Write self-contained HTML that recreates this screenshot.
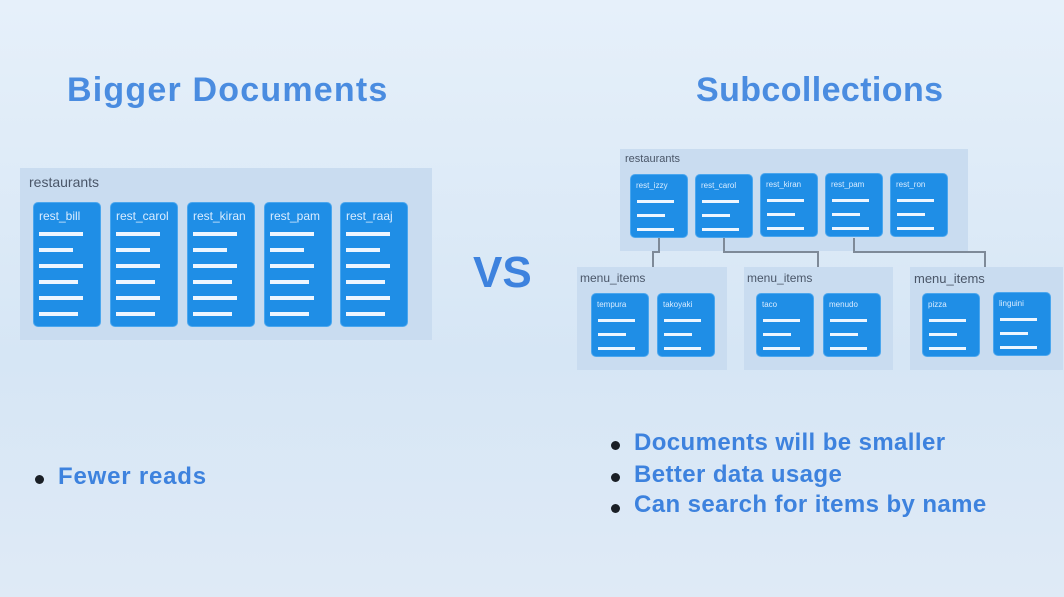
<!DOCTYPE html><html><head><style>
body{margin:0;width:1064px;height:597px;overflow:hidden;background:linear-gradient(#e6f0fa,#d6e6f5 60%,#dfeaf6);font-family:"Liberation Sans",sans-serif;position:relative}
.a{position:absolute}
.t{color:#4a8ce0;font-weight:bold;white-space:nowrap}
.box{position:absolute;background:#c9dcf0}
.bl{position:absolute;color:#4a5668;white-space:nowrap}
.c{position:absolute;background:#1f8ee6;border-radius:5px;border:1px solid #4aa6ee;box-sizing:border-box}
.c span{position:absolute;left:5px;color:#d9ecff;white-space:nowrap}
.c i{position:absolute;left:5px;background:#eef6ff;display:block}
.L{width:68px;height:125px}.L span{top:6px;font-size:12px}.L i{height:4px}
.S{width:58px;height:64px}.S span{top:6px;font-size:8px}.S i{height:3px;left:6px}
.ln{position:absolute;background:#7e8a98}
.dot{position:absolute;width:9px;height:9px;border-radius:50%;background:#1a1f26}
.bt{position:absolute;color:#3d82de;font-weight:bold;font-size:24px;white-space:nowrap;letter-spacing:0.4px}
</style></head><body>
<div class="a t" style="left:67px;top:71px;font-size:34px;letter-spacing:1.2px">Bigger Documents</div>
<div class="a t" style="left:696px;top:71px;font-size:34px;letter-spacing:0.4px">Subcollections</div>
<div class="a t" style="left:473px;top:248px;font-size:44px;color:#3d82de">VS</div>

<div class="box" style="left:20px;top:168px;width:412px;height:172px"></div>
<div class="bl" style="left:29px;top:174px;font-size:14px">restaurants</div>
<div class="c L" style="left:33px;top:202px"><span>rest_bill</span><i style="top:29px;width:44px"></i><i style="top:45px;width:34px"></i><i style="top:61px;width:44px"></i><i style="top:77px;width:39px"></i><i style="top:93px;width:44px"></i><i style="top:109px;width:39px"></i></div>
<div class="c L" style="left:110px;top:202px"><span>rest_carol</span><i style="top:29px;width:44px"></i><i style="top:45px;width:34px"></i><i style="top:61px;width:44px"></i><i style="top:77px;width:39px"></i><i style="top:93px;width:44px"></i><i style="top:109px;width:39px"></i></div>
<div class="c L" style="left:187px;top:202px"><span>rest_kiran</span><i style="top:29px;width:44px"></i><i style="top:45px;width:34px"></i><i style="top:61px;width:44px"></i><i style="top:77px;width:39px"></i><i style="top:93px;width:44px"></i><i style="top:109px;width:39px"></i></div>
<div class="c L" style="left:264px;top:202px"><span>rest_pam</span><i style="top:29px;width:44px"></i><i style="top:45px;width:34px"></i><i style="top:61px;width:44px"></i><i style="top:77px;width:39px"></i><i style="top:93px;width:44px"></i><i style="top:109px;width:39px"></i></div>
<div class="c L" style="left:340px;top:202px"><span>rest_raaj</span><i style="top:29px;width:44px"></i><i style="top:45px;width:34px"></i><i style="top:61px;width:44px"></i><i style="top:77px;width:39px"></i><i style="top:93px;width:44px"></i><i style="top:109px;width:39px"></i></div>

<div class="box" style="left:620px;top:149px;width:348px;height:102px"></div>
<div class="bl" style="left:625px;top:153px;font-size:11px">restaurants</div>
<div class="ln" style="left:658px;top:238px;width:2px;height:14px"></div>
<div class="ln" style="left:652px;top:251px;width:8px;height:2px"></div>
<div class="ln" style="left:652px;top:251px;width:2px;height:16px"></div>
<div class="ln" style="left:723px;top:238px;width:2px;height:14px"></div>
<div class="ln" style="left:723px;top:251px;width:96px;height:2px"></div>
<div class="ln" style="left:817px;top:251px;width:2px;height:16px"></div>
<div class="ln" style="left:853px;top:238px;width:2px;height:14px"></div>
<div class="ln" style="left:853px;top:251px;width:133px;height:2px"></div>
<div class="ln" style="left:984px;top:251px;width:2px;height:16px"></div>
<div class="c S" style="left:630px;top:174px"><span>rest_izzy</span><i style="top:25px;width:37px"></i><i style="top:39px;width:28px"></i><i style="top:53px;width:37px"></i></div>
<div class="c S" style="left:695px;top:174px"><span>rest_carol</span><i style="top:25px;width:37px"></i><i style="top:39px;width:28px"></i><i style="top:53px;width:37px"></i></div>
<div class="c S" style="left:760px;top:173px"><span>rest_kiran</span><i style="top:25px;width:37px"></i><i style="top:39px;width:28px"></i><i style="top:53px;width:37px"></i></div>
<div class="c S" style="left:825px;top:173px"><span>rest_pam</span><i style="top:25px;width:37px"></i><i style="top:39px;width:28px"></i><i style="top:53px;width:37px"></i></div>
<div class="c S" style="left:890px;top:173px"><span>rest_ron</span><i style="top:25px;width:37px"></i><i style="top:39px;width:28px"></i><i style="top:53px;width:37px"></i></div>

<div class="box" style="left:577px;top:267px;width:150px;height:103px"></div>
<div class="box" style="left:744px;top:267px;width:149px;height:103px"></div>
<div class="box" style="left:910px;top:267px;width:153px;height:103px"></div>
<div class="bl" style="left:580px;top:271px;font-size:12px">menu_items</div>
<div class="bl" style="left:747px;top:271px;font-size:12px">menu_items</div>
<div class="bl" style="left:914px;top:271px;font-size:13px">menu_items</div>
<div class="c S" style="left:591px;top:293px"><span>tempura</span><i style="top:25px;width:37px"></i><i style="top:39px;width:28px"></i><i style="top:53px;width:37px"></i></div>
<div class="c S" style="left:657px;top:293px"><span>takoyaki</span><i style="top:25px;width:37px"></i><i style="top:39px;width:28px"></i><i style="top:53px;width:37px"></i></div>
<div class="c S" style="left:756px;top:293px"><span>taco</span><i style="top:25px;width:37px"></i><i style="top:39px;width:28px"></i><i style="top:53px;width:37px"></i></div>
<div class="c S" style="left:823px;top:293px"><span>menudo</span><i style="top:25px;width:37px"></i><i style="top:39px;width:28px"></i><i style="top:53px;width:37px"></i></div>
<div class="c S" style="left:922px;top:293px"><span>pizza</span><i style="top:25px;width:37px"></i><i style="top:39px;width:28px"></i><i style="top:53px;width:37px"></i></div>
<div class="c S" style="left:993px;top:292px"><span>linguini</span><i style="top:25px;width:37px"></i><i style="top:39px;width:28px"></i><i style="top:53px;width:37px"></i></div>

<div class="dot" style="left:35px;top:475px"></div>
<div class="bt" style="left:58px;top:463px;letter-spacing:0.8px">Fewer reads</div>
<div class="dot" style="left:611px;top:441px"></div>
<div class="bt" style="left:634px;top:429px">Documents will be smaller</div>
<div class="dot" style="left:611px;top:473px"></div>
<div class="bt" style="left:634px;top:461px">Better data usage</div>
<div class="dot" style="left:611px;top:504px"></div>
<div class="bt" style="left:634px;top:491px">Can search for items by name</div>
</body></html>
